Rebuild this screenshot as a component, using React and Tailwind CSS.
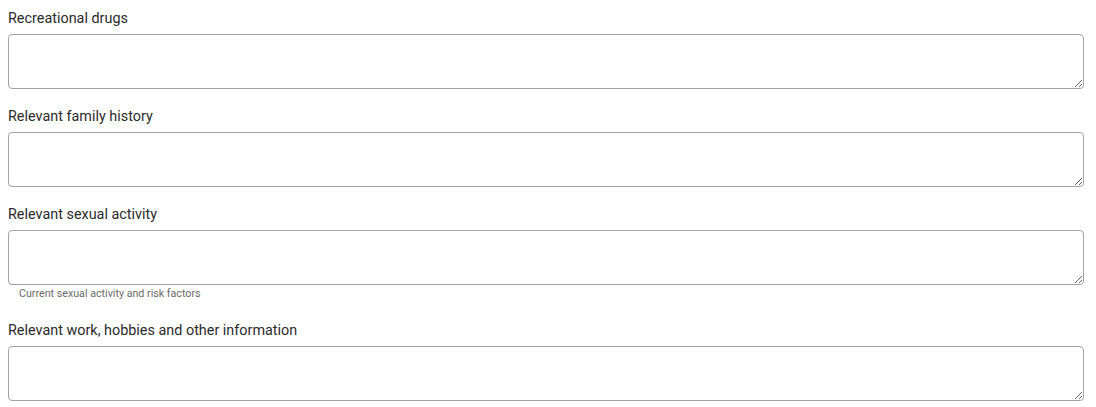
export default function App() {
  const fields = [
    { label: "Recreational drugs" },
    { label: "Relevant family history" },
    { label: "Relevant sexual activity", help: "Current sexual activity and risk factors" },
    { label: "Relevant work, hobbies and other information" },
  ];
  return (
    <div className="bg-white w-[1096px] h-[407px] overflow-hidden pl-2 pr-3 pt-[9px]" style={{ fontFamily: "Roboto, 'Liberation Sans', sans-serif" }}>
      {fields.map((f, i) => (
        <div key={i} className={f.help ? "mb-[21px]" : "mb-[18px]"}>
          <div className="text-[14.4px] leading-[20px] text-[#2b2b2b]">{f.label}</div>
          <textarea
            className="block mt-[5px] w-full h-[55px] border border-[#a3a3a3] rounded-[4px] bg-white outline-none px-2 py-1 text-[14px]"
          />
          {f.help && (
            <div className="mt-[3px] pl-[11px] text-[10.7px] leading-[12px] text-[#6b6b6b]">{f.help}</div>
          )}
        </div>
      ))}
    </div>
  );
}
